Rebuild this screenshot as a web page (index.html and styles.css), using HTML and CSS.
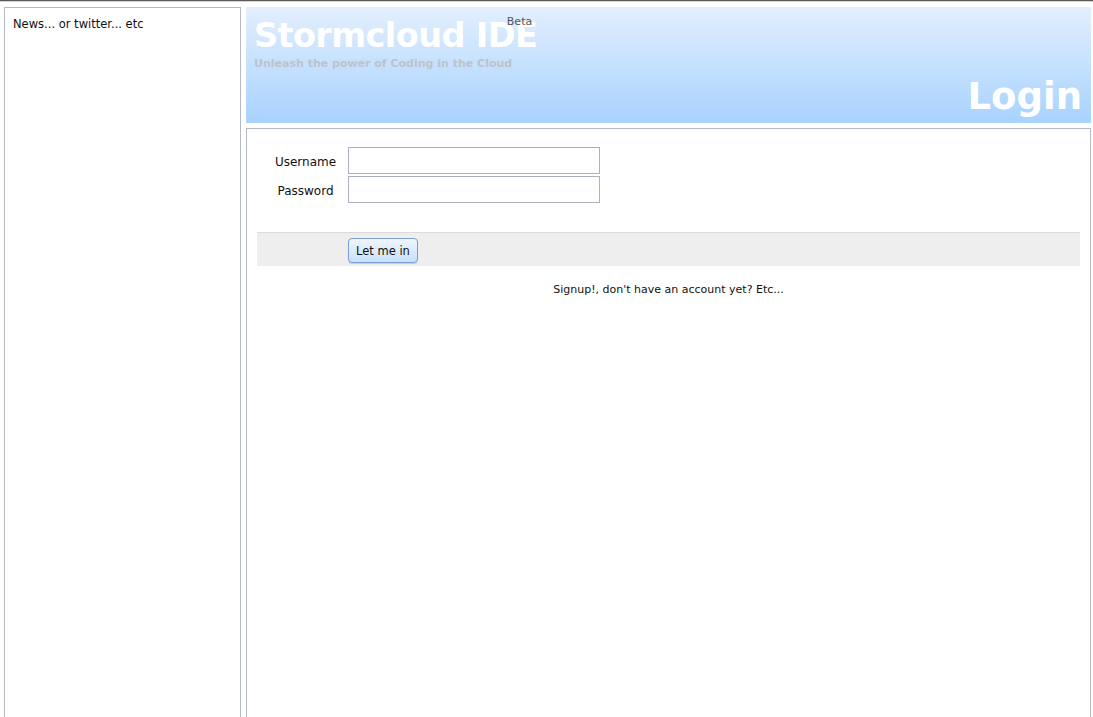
FILE: index.html
```html
<!DOCTYPE html>
<html>
<head>
<meta charset="utf-8">
<title>Stormcloud IDE - Login</title>
<link rel="stylesheet" href="styles.css">
</head>
<body>
<div class="topline"></div>
<div class="page">
  <aside class="sidebar">News... or twitter... etc</aside>
  <main class="main">
    <header class="header">
      <div class="brand">
        <div class="title">Stormcloud IDE<span class="beta">Beta</span></div>
        <div class="tagline">Unleash the power of Coding in the Cloud</div>
      </div>
      <div class="pagename">Login</div>
    </header>
    <section class="content">
      <form class="login">
        <div class="row">
          <label class="lbl" for="u">Username</label>
          <input class="field" id="u" type="text">
        </div>
        <div class="row">
          <label class="lbl" for="p">Password</label>
          <input class="field" id="p" type="password">
        </div>
        <div class="actions">
          <button class="btn" type="button">Let me in</button>
        </div>
      </form>
      <p class="signup">Signup!, don't have an account yet? Etc...</p>
    </section>
  </main>
</div>
</body>
</html>
```

FILE: styles.css
```css
html, body {
  margin: 0;
  padding: 0;
  background: #fff;
  font-family: "DejaVu Sans", Verdana, sans-serif;
  font-size: 12px;
  color: #111;
  overflow: hidden;
}

.topline {
  height: 1px;
  background: #5a5a5a;
  border-bottom: 1px solid #d4d4d4;
}

.page {
  display: flex;
  gap: 5px;
  padding: 5px 2px 0 4px;
}

.sidebar {
  width: 219px;
  flex: none;
  border: 1px solid #b4b9c6;
  padding: 9px 8px;
  min-height: 720px;
  font-size: 11.5px;
}

.main {
  flex: 1;
  display: flex;
  flex-direction: column;
  gap: 5px;
}

.header {
  height: 116px;
  background: linear-gradient(#e3effd, #a8d2fe);
  display: flex;
  justify-content: space-between;
  padding: 0 9px 0 8px;
  box-sizing: border-box;
}

.brand {
  padding-top: 9px;
}

.title {
  position: relative;
  color: #fff;
  font-weight: bold;
  font-size: 33.5px;
  line-height: 40px;
  letter-spacing: -0.6px;
}

.beta {
  position: absolute;
  right: 5px;
  top: -1px;
  font-size: 11px;
  font-weight: normal;
  line-height: 14px;
  letter-spacing: 0;
  color: #555;
}

.tagline {
  color: #bcc3cc;
  font-weight: bold;
  font-size: 11px;
  letter-spacing: 0;
  line-height: 14px;
  margin-top: 1px;
}

.pagename {
  align-self: flex-end;
  color: #fff;
  font-weight: bold;
  font-size: 37px;
  line-height: 40px;
  letter-spacing: 0;
  padding-bottom: 6px;
}

.content {
  border: 1px solid #b4b9c6;
  padding: 18px 10px 0 10px;
  min-height: 620px;
}

.login {
  display: flex;
  flex-direction: column;
  gap: 2px;
}

.row {
  display: flex;
  align-items: center;
}

.lbl {
  width: 91px;
  padding-left: 6px;
  padding-top: 2px;
  box-sizing: border-box;
  text-align: center;
  font-size: 12px;
}

.field {
  width: 252px;
  height: 27px;
  box-sizing: border-box;
  border: 1px solid #aab0bd;
  margin: 0;
  padding: 2px 4px;
  background: #fff;
}

.actions {
  margin-top: 27px;
  background: #eeeeee;
  border-top: 1px solid #dcdcdc;
  padding: 5px 0 3px 91px;
  display: flex;
}

.btn {
  font-family: "DejaVu Sans", Verdana, sans-serif;
  font-size: 11.5px;
  color: #111;
  height: 25px;
  margin: 0;
  padding: 0 7px;
  border: 1px solid #7aa0cf;
  border-radius: 4px;
  background: linear-gradient(#eef6fe, #c8e0f8);
  box-shadow: 0 1px 1px rgba(0,0,0,0.15);
}

.signup {
  text-align: center;
  margin: 17px 0 0 0;
  font-size: 11px;
}
```
